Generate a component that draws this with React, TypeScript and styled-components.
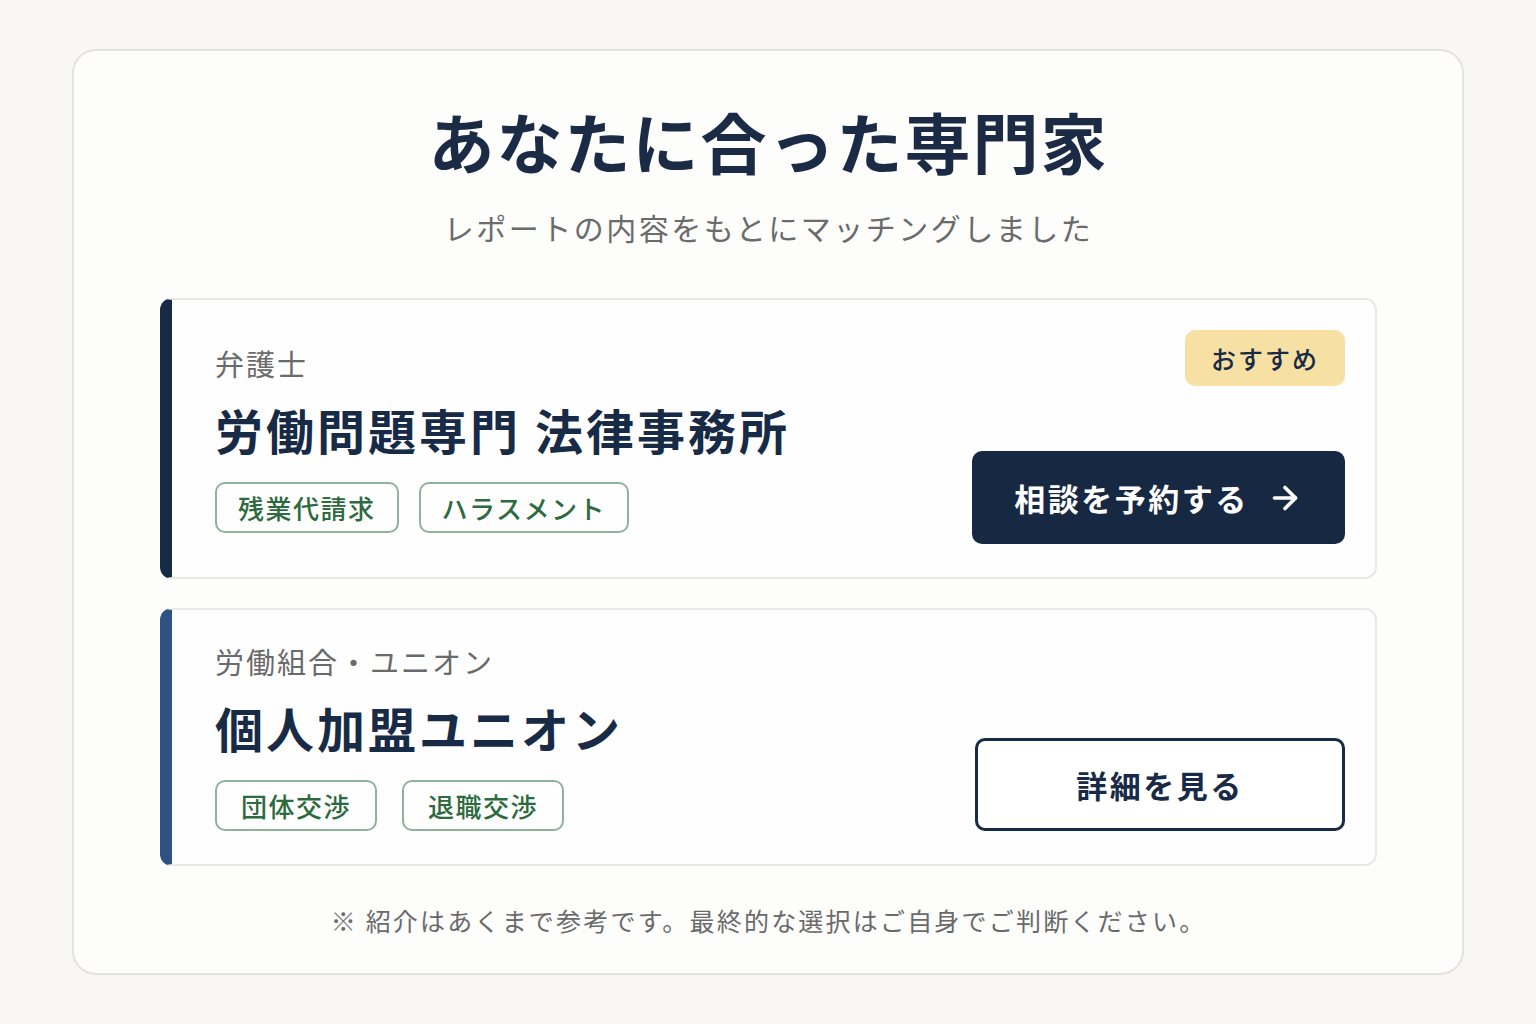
import styled, { createGlobalStyle } from 'styled-components'
import { ArrowRight } from 'lucide-react'

const GlobalStyle = createGlobalStyle`
  html, body {
    margin: 0;
    padding: 0;
    background: #f8f7f4;
  }
  body {
    font-family: "Noto Sans CJK JP", "Noto Sans", sans-serif;
  }
`

type Expert = {
  category: string
  name: string
  tags: string[]
  accent: string
  recommended?: boolean
  primary?: boolean
  action: string
}

const experts: Expert[] = [
  {
    category: '弁護士',
    name: '労働問題専門 法律事務所',
    tags: ['残業代請求', 'ハラスメント'],
    accent: '#172a46',
    recommended: true,
    primary: true,
    action: '相談を予約する',
  },
  {
    category: '労働組合・ユニオン',
    name: '個人加盟ユニオン',
    tags: ['団体交渉', '退職交渉'],
    accent: '#2e5283',
    action: '詳細を見る',
  },
]

const App = () => {
  return (
    <Page>
      <GlobalStyle />
      <Panel>
        <Title>あなたに合った専門家</Title>
        <Subtitle>レポートの内容をもとにマッチングしました</Subtitle>
        <List>
          {experts.map((ex) => (
            <Card key={ex.name} $accent={ex.accent}>
              <Info>
                <Category>{ex.category}</Category>
                <Name>{ex.name}</Name>
                <Tags $gap={ex.primary ? 20 : 25}>
                  {ex.tags.map((t) => (
                    <Tag key={t} $wide={t.length < 5}>{t}</Tag>
                  ))}
                </Tags>
              </Info>
              <Side>
                {ex.recommended ? <Badge>おすすめ</Badge> : <span />}
                <ActionButton $primary={!!ex.primary}>
                  {ex.action}
                  {ex.primary && <ArrowRight size={36} strokeWidth={2.4} />}
                </ActionButton>
              </Side>
            </Card>
          ))}
        </List>
        <Note>※ 紹介はあくまで参考です。最終的な選択はご自身でご判断ください。</Note>
      </Panel>
    </Page>
  )
}

export default App

const Page = styled.div`
  min-height: 1024px;
  box-sizing: border-box;
  padding: 49px 72px 0 72px;
`

const Panel = styled.section`
  box-sizing: border-box;
  width: 1392px;
  height: 926px;
  border: 2px solid #e4e3df;
  border-radius: 24px;
  background: #fdfdfc;
  padding: 50px 85px 0 86px;
  display: flex;
  flex-direction: column;
  align-items: center;
`

const Title = styled.h1`
  margin: 0;
  font-size: 66px;
  line-height: 1.2;
  font-weight: 700;
  letter-spacing: 2px;
  color: #1b2b45;
`

const Subtitle = styled.p`
  margin: 26px 0 0 0;
  font-size: 30px;
  line-height: 1.4;
  letter-spacing: 2.5px;
  color: #6b6b6b;
`

const List = styled.div`
  width: 100%;
  margin-top: 50px;
  display: flex;
  flex-direction: column;
  gap: 29px;
`

const Card = styled.article<{ $accent: string }>`
  box-sizing: border-box;
  display: grid;
  grid-template-columns: 1fr auto;
  border: 2px solid #e8e8e6;
  border-left: 12px solid ${(p) => p.$accent};
  border-radius: 12px;
  background: #fefefe;
  padding: 30px 30px 33px 43px;
`

const Info = styled.div`
  display: flex;
  flex-direction: column;
  justify-content: center;
`

const Category = styled.div`
  font-size: 29px;
  line-height: 42px;
  letter-spacing: 2px;
  color: #6a6a6a;
  margin-bottom: 15px;
`

const Name = styled.div`
  font-size: 48px;
  line-height: 60px;
  font-weight: 700;
  letter-spacing: 3px;
  color: #172a46;
  margin-bottom: 23px;
`

const Tags = styled.div<{ $gap: number }>`
  display: flex;
  gap: ${(p) => p.$gap}px;
`

const Tag = styled.span<{ $wide: boolean }>`
  box-sizing: border-box;
  height: 51px;
  display: inline-flex;
  align-items: center;
  padding: 0 ${(p) => (p.$wide ? 24 : 21)}px;
  border: 2px solid #8fb39a;
  border-radius: 10px;
  font-size: 26px;
  font-weight: 500;
  letter-spacing: 1.5px;
  color: #2d6a3e;
`

const Side = styled.div`
  display: flex;
  flex-direction: column;
  align-items: flex-end;
  justify-content: space-between;
`

const Badge = styled.span`
  box-sizing: border-box;
  height: 56px;
  display: inline-flex;
  align-items: center;
  padding: 0 26px;
  border-radius: 10px;
  background: #f7e0a3;
  font-size: 25px;
  font-weight: 500;
  letter-spacing: 2px;
  color: #172a46;
  margin-bottom: 65px;
`

const ActionButton = styled.button<{ $primary: boolean }>`
  box-sizing: border-box;
  width: ${(p) => (p.$primary ? '373px' : '370px')};
  height: 93px;
  display: flex;
  align-items: center;
  justify-content: center;
  gap: 18px;
  border-radius: 10px;
  border: ${(p) => (p.$primary ? 'none' : '3px solid #172a46')};
  background: ${(p) => (p.$primary ? '#172843' : '#ffffff')};
  color: ${(p) => (p.$primary ? '#ffffff' : '#172a46')};
  font-family: "Noto Sans CJK JP", sans-serif;
  font-size: 31px;
  font-weight: 700;
  letter-spacing: 2.5px;
  cursor: pointer;
`

const Note = styled.p`
  margin: 37px 0 0 0;
  font-size: 25px;
  line-height: 1.4;
  letter-spacing: 2.2px;
  color: #6a6a6a;
`
